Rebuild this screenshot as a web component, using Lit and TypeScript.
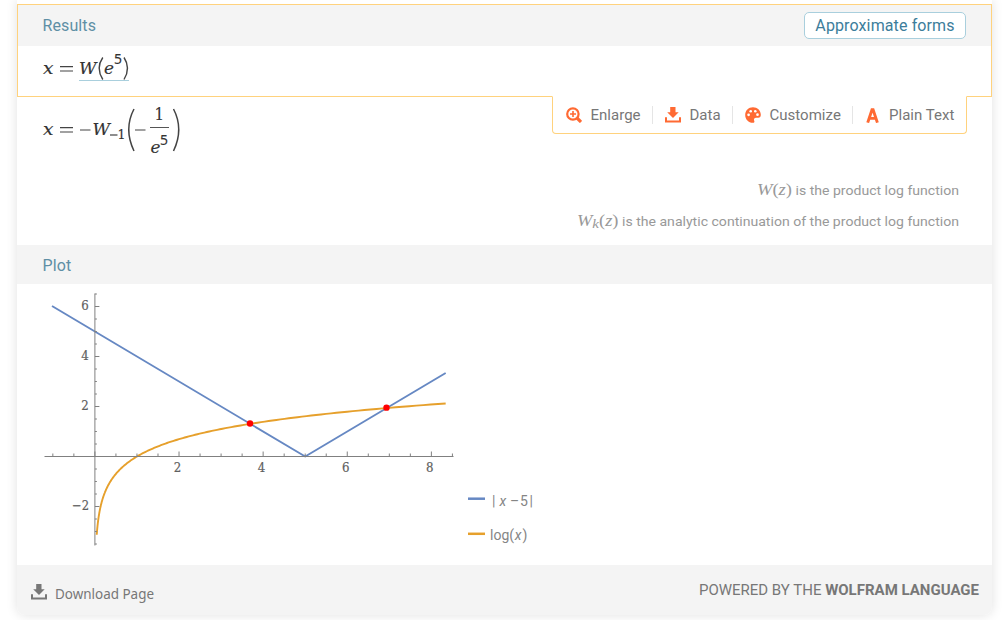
import { LitElement, html, svg, css } from "lit";
import { customElement } from "lit/decorators.js";

const downloadIcon = html`<svg class="icon" width="16" height="16" viewBox="0 0 16 16">
  <path fill="currentColor" d="M5.200 0h5.300v5.200h3.200L8 11 2.200 5.200h3zM0 10.200h2v3.200h12v-3.200h2v5.400H0z" />
</svg>`;
const enlargeIcon = html`<svg class="icon" width="16" height="16" viewBox="0 0 16 16">
  <circle cx="6.900" cy="7" r="5.700" fill="none" stroke="currentColor" stroke-width="2.200" />
  <path d="M11 11l4 4" stroke="currentColor" stroke-width="3.200" />
  <path d="M7 4v6M4 7h6" stroke="currentColor" stroke-width="1.600" />
</svg>`;
const paletteIcon = html`<svg class="icon" width="16" height="16" viewBox="0 0 16 16">
  <path fill="currentColor" d="M8 .2C3.500.2.200 3.500.200 8s3.400 7.800 7.600 7.800c1.500 0 2-.9 1.400-2.100-.8-1.600.1-3 1.900-3h2.200c1.700 0 2.500-1.200 2.500-3C15.800 3.300 12.300.2 8 .2z" />
  <g fill="#fff"><circle cx="3.600" cy="7.800" r="1.350" /><circle cx="5.700" cy="4.200" r="1.300" /><circle cx="10.300" cy="4.200" r="1.300" /><circle cx="12.500" cy="7.700" r="1.350" /></g>
</svg>`;
const letterIcon = html`<svg class="icon" width="14" height="16" viewBox="0 0 14 16">
  <path fill="none" stroke="currentColor" stroke-width="2.900" d="M1.700 15.600L6 2.800h1.100L11.400 15.600M3.500 11.400h6.500" />
</svg>`;

const X0 = 94.9 - 17, Y0 = 456.5 - 284, UX = 42.06, UY = 25;
const px = (x: number) => X0 + x * UX;
const py = (y: number) => Y0 - y * UY;
const range = (a: number, b: number) => Array.from({ length: (b - a) * 2 + 1 }, (_, i) => a + i / 2);

@customElement("function-plot")
export class FunctionPlot extends LitElement {
  static styles = css`
    :host { display: block; height: 281px; }
    svg { display: block; }
    .axis { stroke: #808080; stroke-width: 1; fill: none; }
    .num { font: 13px "DejaVu Serif", serif; font-stretch: condensed; fill: #606060; stroke: #606060; stroke-width: .2px; }
    .curve { fill: none; stroke-width: 1.900; stroke-linejoin: round; }
    .legend { font: 14px Roboto, sans-serif; fill: #858585; }
    .it { font-style: italic; }
  `;
  render() {
    const log = Array.from({ length: 240 }, (_, i) => {
      const x = Math.exp(-3.13 + (i / 239) * (Math.log(8.34) + 3.13));
      return `${px(x).toFixed(2)},${py(Math.log(x)).toFixed(2)}`;
    }).join(" ");
    const abs = [[-1.02, 6.02], [5, 0], [8.34, 3.34]].map(([x, y]) => `${px(x)},${py(y)}`).join(" ");
    return html`<svg width="540" height="281" viewBox="0 0 540 281">
      <polyline class="curve" stroke="#6688c3" points=${abs} />
      <polyline class="curve" stroke="#e6a02c" points=${log} />
      <path class="axis" d="M27.500 ${Y0}H436.500M${X0} 9.500V261.500" />
      ${range(-1, 8.5).map((v) => svg`<path class="axis" d="M${px(v)} ${Y0}v${v % 2 === 0 ? -5 : -3}" />`)}
      ${range(-3.5, 6.5).map((v) => svg`<path class="axis" d="M${X0} ${py(v)}h${v % 2 === 0 ? 4.5 : 2}" />`)}
      ${[2, 4, 6, 8].map((v) => svg`<text class="num" x=${px(v) - 5.3} y="188.300" textLength="7.500" lengthAdjust="spacingAndGlyphs">${v}</text>`)}
      ${[6, 4, 2].map((v) => svg`<text class="num" x="64.300" y=${py(v) + 3.4} textLength="7.500" lengthAdjust="spacingAndGlyphs">${v}</text>`)}
      <text class="num" x="55" y="225.900" textLength="17" lengthAdjust="spacingAndGlyphs">−2</text>
      ${[[3.693, 1.32], [6.937, 1.955]].map(([x, y]) => svg`<circle cx=${px(x) - 0.2} cy=${py(y)} r="3.200" fill="#f00" />`)}
      <path stroke="#6688c3" stroke-width="2.500" d="M451 214.700h17" />
      <path stroke="#e6a02c" stroke-width="2.500" d="M451 249.800h17" />
      <text class="legend"><tspan x="475" y="221.500">|</tspan><tspan class="it" x="482.500">x</tspan><tspan x="493">–</tspan><tspan x="503">5</tspan><tspan x="512.500">|</tspan></text>
      <text class="legend"><tspan x="473" y="256.300">log(</tspan><tspan class="it" x="497.800">x</tspan><tspan x="505.500">)</tspan></text>
    </svg>`;
  }
}

@customElement("app-root")
export class AppRoot extends LitElement {
  static styles = css`
    :host { display: block; width: 1008px; height: 620px; overflow: hidden; background: #fff; font-family: Roboto, sans-serif; }
    .card { width: 975px; height: 615px; margin-left: 17px; background: #fff; border-radius: 0 0 8px 8px; box-shadow: 0 0 12px rgba(0, 0, 0, .12); display: flex; flex-direction: column; overflow: visible; }
    .results { margin-top: 4px; height: 93px; box-sizing: border-box; border: 1px solid #ffd27d; position: relative; }
    .head { display: flex; align-items: center; justify-content: space-between; background: #f4f4f4; color: #5e8fa5; font-size: 16px; letter-spacing: .1px; box-sizing: border-box; padding: 0 25.500px; }
    .results .head { height: 41px; padding: 0 25px 0 24.500px; }
    .forms { box-sizing: border-box; height: 27px; width: 162px; border: 1px solid #a9cfdd; border-radius: 5px; background: #fff; color: #3c7d9b; font: 16px/25px Roboto, sans-serif; padding: 0; letter-spacing: .12px; }
    .tools { position: absolute; top: 91px; right: 24px; width: 415px; height: 38px; box-sizing: border-box; border: 1px solid #ffd27d; border-top-color: #fff; border-radius: 0 0 4px 4px; background: #fff; display: flex; align-items: center; color: #777; font-size: 15px; letter-spacing: .02px; }
    .tool { display: flex; align-items: center; gap: 8.500px; padding-left: 12px; height: 18px; box-sizing: border-box; border-left: 1px solid #e5e5e5; white-space: nowrap; }
    .tool:first-child { border-left: 0; padding-left: 13px; }
    .enlarge { width: 99px; } .data { width: 80px; } .custom { width: 120px; } .tool.plain { width: 114px; padding-left: 13px; gap: 9px; }
    .icon { color: #ff6a33; flex: none; display: block; }
    .math { display: block; }
    .math text { font-family: "DejaVu Serif", serif; font-stretch: condensed; fill: #333; stroke: #333; stroke-width: .15px; }
    .math .it { font-style: italic; }
    .math .sup { stroke-width: .1px; font-family: "Noto Sans", "DejaVu Sans", sans-serif; }
    .second { height: 148px; display: flex; justify-content: space-between; }
    .notes text { font: 13.500px Roboto, sans-serif; fill: #999; }
    .notes .m { font: italic 16px "Liberation Serif", serif; }
    .plothead { height: 39px; padding-top: 2px; }
    .foot { height: 50px; background: #f4f4f4; border-radius: 0 0 8px 8px; display: flex; justify-content: space-between; align-items: center; padding: 0 13px 0 14px; color: #777; font-size: 15px; }
    .foot .icon { color: #777; }
    .dl { display: flex; align-items: center; gap: 8px; padding-top: 5px; }
    .dl .icon { margin-top: -2px; }
    .dl .label { overflow: visible; }
    .dl text { font: 15px "Noto Sans", sans-serif; fill: #777; }
  `;
  render() {
    return html`<main class="card">
      <section class="results">
        <header class="head"><span>Results</span><button class="forms">Approximate forms</button></header>
        <svg class="math" width="200" height="50" viewBox="18 46 200 50">
          <text class="it" x="43" y="73.700" font-size="17.500" textLength="10.500" lengthAdjust="spacingAndGlyphs">x</text>
          <path d="M60 66.700h13M60 71h13" stroke="#444" stroke-width="1.200" />
          <text class="it" x="79" y="73.700" font-size="17" textLength="17.500" lengthAdjust="spacingAndGlyphs">W</text>
          <text class="it" x="104" y="73.700" font-size="17.500" textLength="10" lengthAdjust="spacingAndGlyphs">e</text>
          <text class="sup" x="114" y="64" font-size="13.500" textLength="8" lengthAdjust="spacingAndGlyphs">5</text>
          <path d="M102.800 57.500Q95.500 68 102.800 79.500M124 57.500Q131 68 124 79.500" fill="none" stroke="#444" stroke-width="1.400" />
          <path d="M79 80.500h50" stroke="#a9cfdd" />
        </svg>
        <nav class="tools">
          <span class="tool enlarge">${enlargeIcon}Enlarge</span>
          <span class="tool data">${downloadIcon}Data</span>
          <span class="tool custom">${paletteIcon}Customize</span>
          <span class="tool plain">${letterIcon}Plain Text</span>
        </nav>
      </section>
      <section class="second">
        <svg class="math" width="200" height="148" viewBox="17 97 200 148">
          <text class="it" x="43" y="134.700" font-size="17.500" textLength="10.500" lengthAdjust="spacingAndGlyphs">x</text>
          <path d="M60 127.700h13M60 132h13M80 130h10.500M135 130h10.500" stroke="#444" stroke-width="1.200" />
          <text class="it" x="92.500" y="134.700" font-size="17" textLength="17.500" lengthAdjust="spacingAndGlyphs">W</text>
          <path d="M110 135h7.500" stroke="#444" stroke-width="1.200" />
          <text x="117.500" y="138.500" font-size="12.500" textLength="8" lengthAdjust="spacingAndGlyphs">1</text>
          <text x="154.500" y="120" font-size="16.500" textLength="9.500" lengthAdjust="spacingAndGlyphs">1</text>
          <path d="M150 127.500h19" stroke="#555" />
          <text class="it" x="150.500" y="152.500" font-size="17.500" textLength="10" lengthAdjust="spacingAndGlyphs">e</text>
          <text class="sup" x="160" y="145" font-size="13.500" textLength="8" lengthAdjust="spacingAndGlyphs">5</text>
          <path d="M134 109Q123.500 129 134 151M173.500 109Q184 129 173.500 151" fill="none" stroke="#444" stroke-width="1.500" />
        </svg>
        <svg class="notes" width="450" height="148" viewBox="542 97 450 148">
          <text class="m" x="757" y="195" textLength="35" lengthAdjust="spacingAndGlyphs">W<tspan font-style="normal">(</tspan>z<tspan font-style="normal">)</tspan></text>
          <text x="795.500" y="195.300" textLength="163.500" lengthAdjust="spacingAndGlyphs">is the product log function</text>
          <text class="m" x="577" y="225.500" textLength="41.500" lengthAdjust="spacingAndGlyphs">W<tspan dy="2" font-size="13">k</tspan><tspan dy="-2" font-style="normal">(</tspan>z<tspan font-style="normal">)</tspan></text>
          <text x="622" y="225.500" textLength="337" lengthAdjust="spacingAndGlyphs">is the analytic continuation of the product log function</text>
        </svg>
      </section>
      <header class="head plothead"><span>Plot</span></header>
      <function-plot></function-plot>
      <footer class="foot">
        <span class="dl">${downloadIcon}<svg class="label" width="112" height="24" viewBox="0 0 112 24"><text x="0" y="17.500" textLength="99" lengthAdjust="spacingAndGlyphs">Download Page</text></svg></span>
        <span>POWERED BY THE <b>WOLFRAM LANGUAGE</b></span>
      </footer>
    </main>`;
  }
}
